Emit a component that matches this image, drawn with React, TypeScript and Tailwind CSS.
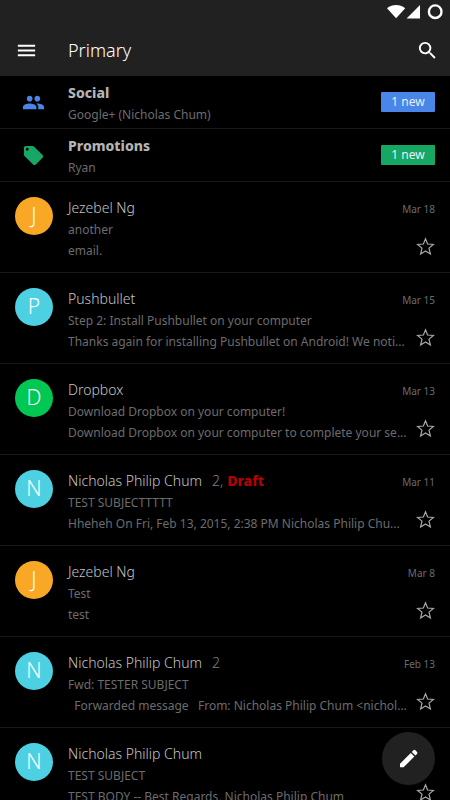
import { MdLocalOffer, MdMenu, MdPeople, MdSearch } from "react-icons/md";
import type { ReactNode } from "react";

type Category = {
  name: string;
  senders: string;
  badge: string;
  badgeClass: string;
  icon: ReactNode;
};

type Mail = {
  sender: string;
  count?: string;
  draft?: boolean;
  date?: string;
  subject: string;
  body: string;
  avatarClass: string;
};

const categories: Category[] = [
  {
    name: "Social",
    senders: "Google+ (Nicholas Chum)",
    badge: "1 new",
    badgeClass: "bg-[#4a86e8]",
    icon: <MdPeople className="size-[23px] text-[#4a86e8]" />,
  },
  {
    name: "Promotions",
    senders: "Ryan",
    badge: "1 new",
    badgeClass: "bg-[#16a765]",
    icon: <MdLocalOffer className="size-[23px] text-[#16a765]" />,
  },
];

const mails: Mail[] = [
  {
    sender: "Jezebel Ng",
    date: "Mar 18",
    subject: "another",
    body: "email.",
    avatarClass: "bg-[#f9a825]",
  },
  {
    sender: "Pushbullet",
    date: "Mar 15",
    subject: "Step 2: Install Pushbullet on your computer",
    body: "Thanks again for installing Pushbullet on Android! We noti...",
    avatarClass: "bg-[#4dd0e1]",
  },
  {
    sender: "Dropbox",
    date: "Mar 13",
    subject: "Download Dropbox on your computer!",
    body: "Download Dropbox on your computer to complete your se...",
    avatarClass: "bg-[#00c853]",
  },
  {
    sender: "Nicholas Philip Chum",
    count: "2",
    draft: true,
    date: "Mar 11",
    subject: "TEST SUBJECTTTTT",
    body: "Hheheh On Fri, Feb 13, 2015, 2:38 PM Nicholas Philip Chu...",
    avatarClass: "bg-[#4dd0e1]",
  },
  {
    sender: "Jezebel Ng",
    date: "Mar 8",
    subject: "Test",
    body: "test",
    avatarClass: "bg-[#f9a825]",
  },
  {
    sender: "Nicholas Philip Chum",
    count: "2",
    date: "Feb 13",
    subject: "Fwd: TESTER SUBJECT",
    body: "  Forwarded message   From: Nicholas Philip Chum <nichol...",
    avatarClass: "bg-[#4dd0e1]",
  },
  {
    sender: "Nicholas Philip Chum",
    subject: "TEST SUBJECT",
    body: "TEST BODY -- Best Regards, Nicholas Philip Chum",
    avatarClass: "bg-[#4dd0e1]",
  },
];

function StatusBar() {
  return (
    <div className="flex h-6 items-center justify-end pr-[7px]">
      <svg viewBox="0 0 56 16" className="h-4 w-14" fill="#fff">
        <path d="M0 4.200C5.400-.2 12.800-.2 18.200 4.200L9.100 14.300z" />
        <path d="M33 1V14.600H19.600z" />
        <circle cx="48.200" cy="7.700" r="6.300" fill="none" stroke="#fff" strokeWidth="2.400" />
      </svg>
    </div>
  );
}

function Toolbar() {
  return (
    <div className="flex h-13 items-center pr-[11px] pl-[15px]">
      <button type="button" aria-label="Open navigation" className="text-white">
        <MdMenu className="size-[23px]" />
      </button>
      <h1 className="ml-[30px] flex-1 text-[18px] leading-6 text-white">Primary</h1>
      <button type="button" aria-label="Search" className="text-white">
        <MdSearch className="size-[23px]" />
      </button>
    </div>
  );
}

function CategoryRow({ category }: { category: Category }) {
  return (
    <li className="flex h-[53px] items-center border-b border-[#181818] pr-[15px]">
      <div className="w-[68px] shrink-0 pl-[22px]">{category.icon}</div>
      <div className="min-w-0 flex-1 pt-1">
        <h2 className="text-[14px] leading-[22px] font-extrabold text-[#b4b4b4]">{category.name}</h2>
        <p className="text-[12px] leading-[22px] font-normal text-[#6c6c6c]">{category.senders}</p>
      </div>
      <span
        className={`flex h-5 w-[54px] items-center justify-center rounded-[1px] text-[12px] font-normal text-[#e6eefb] ${category.badgeClass}`}
      >
        {category.badge}
      </span>
    </li>
  );
}

function MailRow({ mail }: { mail: Mail }) {
  return (
    <li className="flex border-b border-[#181818] px-[15px] pt-[15px] pb-[11px]">
      <div
        className={`flex size-[38px] shrink-0 items-center justify-center rounded-full text-[21px] text-white ${mail.avatarClass}`}
      >
        {mail.sender[0]}
      </div>
      <div className="ml-[15px] min-w-0 flex-1">
        <div className="mb-px flex items-center text-[14px] leading-[21px] text-[#c4c4c4]">
          <h2>{mail.sender}</h2>
          {mail.count && (
            <span className="ml-2.5 text-[#808080]">
              {mail.count}
              {mail.draft && ", "}
            </span>
          )}
          {mail.draft && <span className="ml-1 font-extrabold text-[#b80000]">Draft</span>}
          {mail.date && (
            <time className="ml-auto self-end text-[10px] leading-[18px] font-normal text-[#6c6c6c]">
              {mail.date}
            </time>
          )}
        </div>
        <p className="text-[12px] leading-[21px] font-normal whitespace-pre text-[#6c6c6c]">{mail.subject}</p>
        <div className="flex items-center justify-between">
          <p className="w-0 text-[12px] leading-[21px] font-normal whitespace-pre text-[#6c6c6c]">{mail.body}</p>
          <button type="button" aria-label="Star" className="-mt-2">
            <svg viewBox="0 0 19 19" className="size-[19px]" fill="none" stroke="#a8a8a8" strokeWidth="1.200">
              <path d="M9.500 1.800l2.100 5.200 5.800.4-4.400 3.700 1.400 5.900-4.900-3.100-4.900 3.100L6 11.100 1.600 7.400l5.800-.4z" />
            </svg>
          </button>
        </div>
      </div>
    </li>
  );
}

export default function App() {
  return (
    <div className="h-screen overflow-hidden bg-black font-['Noto_Sans',sans-serif] font-light">
      <header className="bg-[#212121]">
        <StatusBar />
        <Toolbar />
      </header>
      <main>
        <ul>
          {categories.map((category) => (
            <CategoryRow key={category.name} category={category} />
          ))}
          {mails.map((mail, i) => (
            <MailRow key={i} mail={mail} />
          ))}
        </ul>
      </main>
      <button
        type="button"
        aria-label="Compose"
        className="fixed right-[15px] bottom-[15px] flex size-[53px] items-center justify-center rounded-full bg-[#212121]"
      >
        <svg viewBox="0 0 58 58" className="size-[19px]" fill="#fff">
          <path d="M3 56V45L36 12L47 23L14 56z" />
          <path d="M39 9l5-5q3-3 6 0l5 5q3 3 0 6l-5 5z" />
        </svg>
      </button>
    </div>
  );
}
